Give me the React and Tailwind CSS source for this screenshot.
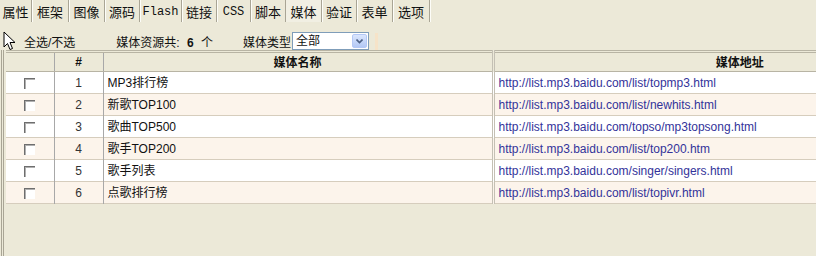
import { useState } from "react";

const tabs = [
  { label: "属性", w: "w-[32px]" },
  { label: "框架", w: "w-[37px]" },
  { label: "图像", w: "w-[36px]" },
  { label: "源码", w: "w-[35px]" },
  { label: "Flash", w: "w-[42px]", mono: true },
  { label: "链接", w: "w-[35px]" },
  { label: "CSS", w: "w-[34px]", mono: true },
  { label: "脚本", w: "w-[35px]" },
  { label: "媒体", w: "w-[36px]" },
  { label: "验证", w: "w-[35px]" },
  { label: "表单", w: "w-[36px]" },
  { label: "选项", w: "w-[37px]" },
];

const media = [
  { name: "MP3排行榜", url: "http://list.mp3.baidu.com/list/topmp3.html" },
  { name: "新歌TOP100", url: "http://list.mp3.baidu.com/list/newhits.html" },
  { name: "歌曲TOP500", url: "http://list.mp3.baidu.com/topso/mp3topsong.html" },
  { name: "歌手TOP200", url: "http://list.mp3.baidu.com/list/top200.htm" },
  { name: "歌手列表", url: "http://list.mp3.baidu.com/singer/singers.html" },
  { name: "点歌排行榜", url: "http://list.mp3.baidu.com/list/topivr.html" },
];

const font = "font-['Liberation_Sans','Noto_Sans_CJK_SC',sans-serif]";

const Checkbox = () => (
  <span className="inline-block align-middle w-[11px] h-[11px] border-t border-l border-[#6e6e6e] shadow-[inset_1px_1px_0_#b0b0b0] bg-white" />
);

const Cursor = () => (
  <svg width="14" height="20" viewBox="0 0 14 20" className="block">
    <path
      d="M1 1 L1 16 L4.5 12.5 L7 18.5 L9.5 17.5 L7 11.5 L12 11.5 Z"
      fill="#fff"
      stroke="#000"
      strokeWidth="1"
    />
  </svg>
);

export default function App() {
  const [type, setType] = useState("全部");
  const [tab, setTab] = useState("媒体");

  return (
    <div className={`w-[816px] h-[256px] overflow-hidden bg-[#ece9d8] text-[12px] text-[#111] ${font}`}>
      <div className="flex h-[22px]">
        {tabs.map((t) => (
          <div
            key={t.label}
            onClick={() => setTab(t.label)}
            className={`${t.w} h-full flex items-center justify-center pt-[1px] border-r border-[#a9a595] shadow-[1px_0_0_#fdfdf8] cursor-default ${
              t.mono
                ? "font-['Liberation_Mono',monospace] text-[12px]"
                : "font-['Noto_Sans_CJK_SC',sans-serif] text-[13px]"
            } ${tab === t.label ? "bg-[#f1efe3]" : ""}`}
          >
            {t.label}
          </div>
        ))}
      </div>

      <div className="flex items-center h-[18px] mt-[10px]">
        <div className="ml-[3px]">
          <Cursor />
        </div>
        <span className="ml-[7px] mt-[3px]">全选/不选</span>
        <span className="ml-[41px] mt-[3px]">
          媒体资源共: <b className="mx-[4px]">6</b> 个
        </span>
        <span className="ml-[30px] mt-[3px]">媒体类型</span>
        <div className="relative ml-[1px] w-[77px] h-[18px] bg-white border border-[#7f9db9] flex items-center">
          <span className="pl-[3px]">{type}</span>
          <select
            value={type}
            onChange={(e) => setType(e.target.value)}
            className="absolute inset-0 opacity-0"
          >
            <option>全部</option>
            <option>音频</option>
            <option>视频</option>
          </select>
          <span className="absolute right-[1px] top-[1px] w-[15px] h-[14px] rounded-[2px] bg-gradient-to-b from-[#dbe6fd] to-[#b3c8f5] border border-[#b4c8f6] flex items-center justify-center pointer-events-none">
            <svg width="7" height="5" viewBox="0 0 7 5">
              <path d="M0.5 0.5 L3.5 3.5 L6.5 0.5" fill="none" stroke="#4d6185" strokeWidth="1.6" />
            </svg>
          </span>
        </div>
        <span className="ml-[6px] w-[3px] h-[17px] bg-[#f6e3c8]" />
      </div>

      <div className="h-[208px] border-l-[3px] border-double border-[#a9a595] ml-[1px] pl-[2px] overflow-hidden">
        <table className="w-[979px] border-collapse table-fixed">
          <colgroup>
            <col className="w-[48px]" />
            <col className="w-[49px]" />
            <col className="w-[390px]" />
            <col />
          </colgroup>
          <thead>
            <tr className="h-[20px] border-t-[3px] border-double border-[#b8b4a4] border-b border-b-[#b8b4a4]">
              <th className="border-r border-[#a8a8a8]" />
              <th className="border-r border-[#a8a8a8] font-bold text-center">#</th>
              <th className="border-r-[3px] border-double border-[#c4c0b4] font-bold text-center font-['Noto_Sans_CJK_SC',sans-serif]">
                媒体名称
              </th>
              <th className="font-bold text-center font-['Noto_Sans_CJK_SC',sans-serif]">媒体地址</th>
            </tr>
          </thead>
          <tbody>
            {media.map((m, i) => (
              <tr
                key={m.url}
                className={`h-[22px] border-b border-[#d6cdbd] ${i % 2 === 1 ? "bg-[#fcf4eb]" : "bg-white"}`}
              >
                <td className="border-r border-[#a8a8a8] text-center leading-none">
                  <Checkbox />
                </td>
                <td className="border-r border-[#a8a8a8] text-center text-[#333]">{i + 1}</td>
                <td className="border-r-[3px] border-double border-[#c4c0b4] pl-[4px]">{m.name}</td>
                <td className="pl-[4px] text-[#33339a]">{m.url}</td>
              </tr>
            ))}
            <tr className="h-[3px] border-t border-[#b8b4a4] bg-[#ece9d8]">
              <td colSpan={4} />
            </tr>
          </tbody>
        </table>
      </div>
    </div>
  );
}
